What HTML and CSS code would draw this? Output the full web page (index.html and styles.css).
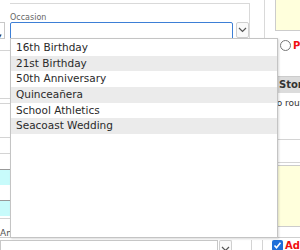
FILE: index.html
```html
<!DOCTYPE html>
<html lang="en">
<head>
    <meta charset="UTF-8">
    <title>Occasion</title>
    <link rel="stylesheet" href="styles.css">
</head>
<body>
    <div class="app">
        <div class="cols">
            <div class="left">
                <div class="left-select"><span class="arrow">&#9662;</span></div>
                <div class="left-rule r1"></div>
                <div class="left-rule r2"></div>
                <div class="left-rule r3"></div>
                <div class="left-rule r4"></div>
                <div class="left-rule r6"></div>
                <div class="cyan c1"></div>
                <div class="cyan c2"></div>
                <div class="left-rule r5"></div>
                <div class="left-label">Amount</div>
            </div>
            <div class="center">
                <div class="center-panel">
                    <label class="field-label" for="occasion">Occasion</label>
                    <div class="combo">
                        <input type="text" id="occasion" class="combo-input">
                        <span class="combo-btn">
                            <svg width="9" height="6" viewBox="0 0 9 6"><path d="M1 1 L4.5 4.5 L8 1" fill="none" stroke="#555" stroke-width="1.2"/></svg>
                        </span>
                    </div>
                </div>
            </div>
            <div class="gutter"><div class="gutter-line"></div></div>
            <div class="right">
                <div class="note"></div>
                <div class="radio-row"><span class="radio"></span><span class="red-label">Pickup</span></div>
                <div class="table-head">Store</div>
                <div class="table-empty">No routes</div>
                <div class="right-rule first"></div>
                <div class="right-rule"></div>
                <div class="note tall"></div>
            </div>
        </div>
        <div class="footer">
            <div class="foot-select">
                <span class="foot-box"></span>
                <span class="combo-btn small">
                    <svg width="9" height="6" viewBox="0 0 9 6"><path d="M1 1 L4.5 4.5 L8 1" fill="none" stroke="#555" stroke-width="1.2"/></svg>
                </span>
            </div>
            <div class="foot-lines"></div>
            <div class="check-row">
                <span class="check">
                    <svg width="11" height="11" viewBox="0 0 11 11"><path d="M2.5 5.5 L4.5 7.8 L8.5 2.8" fill="none" stroke="#fff" stroke-width="1.6"/></svg>
                </span>
                <span class="red-label">Add</span>
            </div>
        </div>

        <ul class="dropdown">
            <li>16th Birthday</li>
            <li>21st Birthday</li>
            <li>50th Anniversary</li>
            <li>Quinceañera</li>
            <li>School Athletics</li>
            <li>Seacoast Wedding</li>
        </ul>
    </div>
</body>
</html>
```

FILE: styles.css
```css
body {
    margin: 0;
    background: #fff;
    font-family: "DejaVu Sans", Verdana, sans-serif;
    color: #333;
}
.app {
    position: relative;
    width: 300px;
    height: 250px;
    overflow: hidden;
}
.cols {
    display: grid;
    grid-template-columns: 10px 240px 25px 25px;
    height: 237px;
    border-bottom: 1px solid #cfcfcf;
}

/* left strip */
.left {
    display: flex;
    flex-direction: column;
    overflow: hidden;
}
.left-select {
    flex: none;
    margin-top: 22px;
    height: 15px;
    width: 4px;
    border: 1px solid #c8c8c8;
    border-left: none;
}
.left-select .arrow {
    font-size: 7px;
    color: #333;
    line-height: 15px;
    margin-left: -2px;
}
.left-rule {
    flex: none;
    height: 1px;
    background: #d4d4d4;
}
.r1 { margin-top: 11px; }
.r2 { margin-top: 47px; }
.r3 { margin-top: 4px; }
.r4 { margin-top: 33px; }
.r6 { margin-top: 15px; }
.cyan {
    flex: none;
    height: 15px;
    background: #c8fbfb;
    border-top: 1px solid #999;
}
.c1 { margin-top: 15px; }
.c2 { margin-top: 15px; }
.r5 { margin-top: 2px; }
.left-label {
    flex: none;
    margin-top: 9px;
    font-size: 9px;
    line-height: 10px;
    color: #555;
    white-space: nowrap;
}

/* center panel */
.center-panel {
    margin-top: 3px;
    height: 35px;
    border-top: 1px solid #d9d9d9;
    border-right: 1px solid #d9d9d9;
}
.field-label {
    display: block;
    margin-top: 9px;
    font-size: 8px;
    color: #666;
    line-height: 9px;
}
.combo {
    display: flex;
    gap: 3px;
}
.combo-input {
    width: 223px;
    height: 18px;
    box-sizing: border-box;
    border: 1.5px solid #3d7fd6;
    border-radius: 2px;
    margin: 0;
    padding: 0;
    outline: none;
}
.combo-btn {
    flex: none;
    width: 13px;
    height: 16px;
    box-sizing: border-box;
    border: 1px solid #cfcfcf;
    border-radius: 2px;
    display: flex;
    align-items: center;
    justify-content: center;
    background: #fafafa;
}

/* gutter */
.gutter-line {
    margin-left: 14px;
    width: 1px;
    height: 38px;
    background: #d9d9d9;
}

/* right column */
.right {
    display: flex;
    flex-direction: column;
    overflow: hidden;
}
.note {
    flex: none;
    height: 31px;
    background: #ffffdc;
    border-left: 1px solid #ccc;
    border-bottom: 1px solid #ccc;
    box-sizing: border-box;
}
.note.tall {
    height: 62px;
    border-top: 1px solid #ccc;
    margin-top: 2px;
}
.radio-row {
    flex: none;
    display: flex;
    align-items: center;
    gap: 2px;
    margin-top: 9px;
    margin-left: 5px;
    white-space: nowrap;
}
.radio {
    flex: none;
    width: 9px;
    height: 9px;
    border: 1.5px solid #777;
    border-radius: 50%;
    background: #fff;
}
.red-label {
    color: #f01010;
    font-weight: bold;
    font-size: 10px;
}
.table-head {
    flex: none;
    margin-top: 25px;
    height: 16px;
    line-height: 16px;
    background: #dcdcdc;
    font-weight: bold;
    font-size: 10px;
    color: #333;
    padding-left: 4px;
    white-space: nowrap;
    border-top: 1px solid #ccc;
}
.table-empty {
    flex: none;
    margin-top: 5px;
    font-size: 9px;
    white-space: nowrap;
    text-indent: -5px;
}
.right-rule {
    flex: none;
    height: 1px;
    background: #d4d4d4;
    margin-top: 22px;
}
.right-rule.first {
    margin-top: 31px;
}

/* footer */
.footer {
    display: flex;
    align-items: flex-start;
    padding-top: 2px;
}
.foot-select {
    flex: none;
    display: flex;
    gap: 1px;
}
.foot-box {
    flex: none;
    width: 218px;
    height: 14px;
    box-sizing: border-box;
    border: 1px solid #c8c8c8;
    border-bottom: none;
}
.combo-btn.small {
    height: 14px;
    border-bottom: none;
    border-radius: 2px 2px 0 0;
    align-items: flex-end;
    padding-bottom: 2px;
}
.foot-lines {
    flex: none;
    width: 10px;
    height: 14px;
    margin-left: 19px;
    border-left: 1px solid #d4d4d4;
    border-right: 1px solid #d4d4d4;
}
.check-row {
    flex: none;
    display: flex;
    align-items: center;
    gap: 2px;
    margin-left: 9px;
    white-space: nowrap;
}
.check {
    flex: none;
    width: 11px;
    height: 11px;
    border-radius: 2px;
    background: #1e6fd9;
    display: flex;
}

/* open dropdown list */
.dropdown {
    position: absolute;
    left: 10px;
    top: 38px;
    width: 268px;
    height: 200px;
    box-sizing: border-box;
    margin: 0;
    padding: 1px 0 0;
    list-style: none;
    background: #fff;
    border: 1px solid #c4c4c4;
    box-shadow: 1px 1px 2px rgba(0, 0, 0, 0.15);
}
.dropdown li {
    height: 15.7px;
    line-height: 15.7px;
    padding-left: 5px;
    font-size: 10.5px;
    color: #2a2a2a;
    white-space: nowrap;
}
.dropdown li:nth-child(even) {
    background: #ebebeb;
}
```
